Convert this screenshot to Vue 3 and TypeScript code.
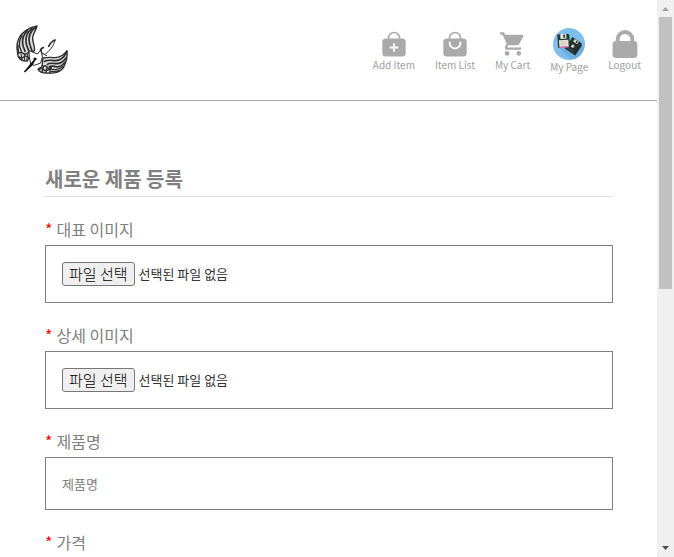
<script setup lang="ts">
import { ref } from 'vue'

interface NavItem {
  id: 'add' | 'list' | 'cart' | 'page' | 'logout'
  label: string
}

interface FileField {
  id: string
  label: string
  fileName: string
}

const navItems: NavItem[] = [
  { id: 'add', label: 'Add Item' },
  { id: 'list', label: 'Item List' },
  { id: 'cart', label: 'My Cart' },
  { id: 'page', label: 'My Page' },
  { id: 'logout', label: 'Logout' },
]

const fileFields = ref<FileField[]>([
  { id: 'main-image', label: '대표 이미지', fileName: '' },
  { id: 'detail-image', label: '상세 이미지', fileName: '' },
])

const productName = ref('')
const price = ref('')

function openPicker(id: string): void {
  document.getElementById(`${id}-file`)?.click()
}

function onFileChange(field: FileField, event: Event): void {
  field.fileName = (event.target as HTMLInputElement).files?.[0]?.name ?? ''
}
</script>

<template>
  <div class="window">
    <div class="page">
      <header class="header">
        <a href="#" class="logo" aria-label="Home">
          <svg viewBox="18 18 156 156" fill="none" stroke="#2a2a2a" stroke-linecap="round" stroke-linejoin="round">
            <path d="M81 24C56 28 34 44 26 62C19 78 20 92 23 104C22 120 32 131 52 129L64 104L73 98C76 84 66 72 68 58C70 44 78 38 81 24Z" fill="#ddd" stroke-width="4" />
            <path d="M79 27C64 36 58 46 57 62C56 76 62 86 66 98" stroke-width="5" />
            <path d="M66 31C50 44 46 58 48 72C49 84 54 90 56 98" stroke-width="5" />
            <path d="M52 38C38 52 36 64 38 78C39 88 44 94 45 100" stroke-width="5" />
            <path d="M36 52C28 66 27 76 29 86L34 100" stroke-width="4" />
            <path d="M24 82L25 104" stroke-width="4" />
            <path d="M25 106q8-6 14 0t14-1t12 0M28 117q7 6 13 0t14 1" stroke-width="4" />
            <path d="M33 107L36 126M43 108L44 128M54 107L50 126" stroke-width="3" />
            <path d="M171 98C160 114 146 120 132 119C118 117 108 118 99 120L96 146L84 154C88 164 104 166 120 165C144 167 160 156 166 136C172 122 172 110 171 98Z" fill="#ddd" stroke-width="4" />
            <path d="M169 104C160 122 148 129 134 128C122 126 112 126 104 130" stroke-width="5" />
            <path d="M169 119C158 134 148 138 136 137C126 135 118 135 112 139" stroke-width="5" />
            <path d="M166 132C156 144 148 148 138 146C130 144 124 143 118 146" stroke-width="5" />
            <path d="M160 145C150 154 142 157 130 154" stroke-width="4" />
            <path d="M148 157C140 162 132 162 124 160" stroke-width="4" />
            <path d="M98 146q8-6 13 1t13 1M87 155q8-6 14 0t14 0t12 0M100 148L96 162M111 148L108 164M122 150L119 164" stroke-width="4" />
            <path d="M58 98L82 108L94 95L97 117L92 135L73 142L62 138L58 118Z" fill="#fff" stroke-width="3" />
            <path d="M99 109C89 101 90 93 98 89M106 108C119 98 130 87 135 66" stroke-width="3" />
            <path d="M91 96Q94 90 100 89M116 85Q124 70 135 66" stroke-width="5" />
            <path d="M94 104L110 113" stroke-width="3" />
            <path d="M76 123L44 161L66 141Z" fill="#111" stroke="#111" stroke-width="4" />
            <circle cx="75" cy="123" r="4" fill="#111" />
          </svg>
        </a>
        <nav class="nav">
          <a v-for="item in navItems" :key="item.id" href="#" class="nav-item">
            <svg v-if="item.id === 'add'" class="icon" viewBox="0 0 28 28">
              <path d="M8.5 9V8a5.5 5.5 0 0 1 11 0v1" fill="none" stroke="#aaa" stroke-width="1.6" />
              <rect x="2.3" y="8.5" width="23.4" height="18" rx="3.5" fill="#aaa" />
              <path d="M14 13.2v8.6M9.7 17.5h8.6" stroke="#fff" stroke-width="1.8" />
            </svg>
            <svg v-else-if="item.id === 'list'" class="icon" viewBox="0 0 28 28">
              <path d="M8.5 9V8a5.5 5.5 0 0 1 11 0v1" fill="none" stroke="#aaa" stroke-width="1.6" />
              <rect x="2.3" y="8.5" width="23.4" height="18" rx="3.5" fill="#aaa" />
              <path d="M8.7 12.5v.7a5.3 5.3 0 0 0 10.6 0v-.7" fill="none" stroke="#fff" stroke-width="1.9" stroke-linecap="round" />
            </svg>
            <svg v-else-if="item.id === 'cart'" class="icon" viewBox="0 0 24 24" fill="#aaa">
              <path d="M7 18c-1.1 0-1.99.9-1.99 2S5.9 22 7 22s2-.9 2-2-.9-2-2-2zM1 2v2h2l3.6 7.59-1.35 2.45c-.16.28-.25.61-.25.96 0 1.1.9 2 2 2h12v-2H7.42c-.14 0-.25-.11-.25-.25l.03-.12.9-1.63h7.45c.75 0 1.41-.41 1.75-1.03l3.58-6.49A1 1 0 0 0 20 4H5.21l-.94-2H1zm16 16c-1.1 0-1.99.9-1.99 2s.89 2 1.99 2 2-.9 2-2-.9-2-2-2z" />
            </svg>
            <svg v-else-if="item.id === 'page'" class="avatar" viewBox="0 0 96 96">
              <defs>
                <clipPath id="avatar-clip"><circle cx="48" cy="48" r="48" /></clipPath>
              </defs>
              <g clip-path="url(#avatar-clip)">
                <path d="M0 0H96V96H0Z" fill="#80bfec" />
                <path d="M19 61L51 93H76L94 60L78 45Z" fill="#6dafe0" />
                <g transform="rotate(34 62 54)">
                  <path d="M44 34H77L82 40V75H44Z" fill="#20312f" />
                  <path d="M53 35H68V44H53Z" fill="#d6d6cb" />
                  <path d="M61 36H65V42H61Z" fill="#20312f" />
                  <circle cx="60" cy="56" r="5" fill="#cfcfc8" />
                  <path d="M47 67H74V71H47Z" fill="#354542" />
                </g>
                <g transform="rotate(-4 32 38)">
                  <path d="M14 18H46L50 22V59H14Z" fill="#263a34" />
                  <path d="M23 18H41V32H23Z" fill="#e5e5de" />
                  <path d="M32 20H37V29H32Z" fill="#1d2927" />
                  <path d="M18 36H46V56H18Z" fill="#e9e5d7" />
                  <path d="M18 55H46V59H18Z" fill="#ed83cb" />
                  <path d="M21 41H42M21 46H42M21 51H39" stroke="#bdbdb0" stroke-width="1.5" />
                </g>
              </g>
            </svg>
            <svg v-else class="icon" viewBox="0 0 28 28">
              <path d="M6.7 12V9.3a7.3 7.3 0 0 1 14.6 0V12" fill="none" stroke="#aaa" stroke-width="3.8" />
              <rect x="1.6" y="11" width="24.8" height="17" rx="3.5" fill="#aaa" />
            </svg>
            <span>{{ item.label }}</span>
          </a>
        </nav>
      </header>

      <main class="content">
        <h1 class="title">새로운 제품 등록</h1>
        <form class="form" @submit.prevent>
          <div v-for="field in fileFields" :key="field.id" class="field">
            <label class="label" :for="`${field.id}-file`"><span class="required">*</span>{{ field.label }}</label>
            <div class="box">
              <input :id="`${field.id}-file`" type="file" accept="image/*" hidden @change="onFileChange(field, $event)" />
              <button type="button" class="file-button" @click="openPicker(field.id)">파일 선택</button>
              <span class="file-name">{{ field.fileName || '선택된 파일 없음' }}</span>
            </div>
          </div>
          <div class="field">
            <label class="label" for="product-name"><span class="required">*</span>제품명</label>
            <input id="product-name" v-model="productName" class="text-input" type="text" placeholder="제품명" />
          </div>
          <div class="field">
            <label class="label" for="price"><span class="required">*</span>가격</label>
            <input id="price" v-model="price" class="text-input" type="text" />
          </div>
        </form>
      </main>
    </div>

    <div class="scrollbar" aria-hidden="true">
      <svg class="arrow" viewBox="0 0 17 17"><path d="M5 11H12L8.5 7Z" fill="#a3a3a3" /></svg>
      <div class="track"><div class="thumb"></div></div>
      <svg class="arrow" viewBox="0 0 17 17"><path d="M5 6H12L8.5 10Z" fill="#505050" /></svg>
    </div>
  </div>
</template>

<style>
body {
  margin: 0;
  background: #fff;
}
</style>

<style scoped>
.window {
  display: flex;
  height: 100vh;
  overflow: hidden;
  font-family: "Noto Sans CJK KR", "Noto Sans", sans-serif;
  color: #808080;
}

.page {
  flex: 1;
  min-width: 0;
  overflow-y: auto;
  scrollbar-width: none;
}

.header {
  display: flex;
  align-items: center;
  justify-content: space-between;
  padding: 24px 16px;
  border-bottom: 1px solid #aaa;
}

.logo,
.logo svg {
  display: block;
  width: 52px;
  height: 52px;
}

.nav {
  display: flex;
  align-items: center;
  gap: 20px;
  padding-top: 2px;
}

.nav-item {
  display: flex;
  flex-direction: column;
  align-items: center;
  color: #a0a0a0;
  font-size: 10px;
  font-weight: 400;
  line-height: 14px;
  text-decoration: none;
  white-space: nowrap;
}

.icon {
  width: 28px;
  height: 28px;
}

.avatar {
  width: 32px;
  height: 32px;
}

.content {
  padding: 64px 44px 64px 45px;
}

.title {
  margin: 0 0 20px;
  padding-bottom: 3px;
  border-bottom: 1px solid #e0e0e0;
  font-size: 20px;
  font-weight: 700;
  line-height: 28px;
}

.form {
  display: flex;
  flex-direction: column;
  gap: 20px;
}

.field {
  display: flex;
  flex-direction: column;
  gap: 4px;
}

.label {
  display: flex;
  gap: 4px;
  font-size: 16px;
  line-height: 24px;
}

.required {
  color: #f00;
}

.box {
  display: flex;
  align-items: center;
  gap: 4px;
  padding: 16px;
  border: 1px solid #808080;
}

.file-button {
  height: 24px;
  padding: 0 6px;
  border: 1px solid #767676;
  border-radius: 3px;
  background: #efefef;
  color: #000;
  font-family: inherit;
  font-size: 15px;
  font-weight: 300;
  line-height: 20px;
}

.file-name {
  color: #333;
  font-size: 13px;
  line-height: 20px;
}

.text-input {
  box-sizing: border-box;
  width: 100%;
  padding: 16px;
  border: 1px solid #808080;
  border-radius: 0;
  color: #333;
  font-family: inherit;
  font-size: 13px;
  line-height: 19px;
}

.text-input::placeholder {
  color: #808080;
}

.scrollbar {
  display: flex;
  flex-direction: column;
  width: 17px;
  background: #f0f0f0;
}

.arrow {
  width: 17px;
  height: 17px;
}

.track {
  flex: 1;
  padding: 0 2px;
}

.thumb {
  height: 52%;
  background: #c1c1c1;
}
</style>
